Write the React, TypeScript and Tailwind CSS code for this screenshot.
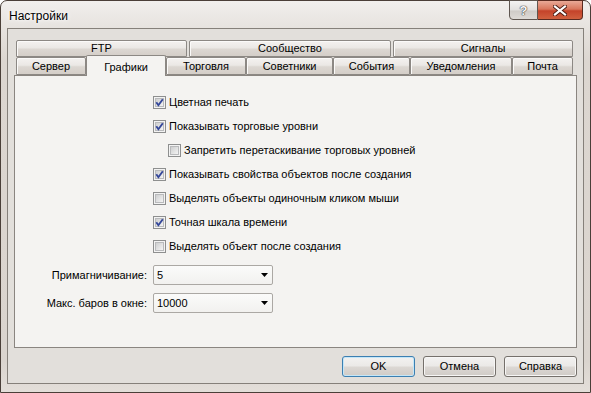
import React from "react";

function CheckBox({ checked }: { checked: boolean }) {
  return (
    <svg width="13" height="13" viewBox="0 0 13 13" className="shrink-0 block">
      <defs>
        <linearGradient id="cbInner" x1="0" y1="0" x2="1" y2="1">
          <stop offset="0" stopColor="#cbcccd" />
          <stop offset="1" stopColor="#f6f6f6" />
        </linearGradient>
      </defs>
      <rect x="0.5" y="0.5" width="12" height="12" fill="#f3f3f3" stroke="#8e8f8f" />
      <rect x="2.5" y="2.5" width="8" height="8" fill="url(#cbInner)" stroke="#b9babc" />
      {checked && (
        <path d="M3.3 6.2 L5.4 9.2 L9.8 3.2" fill="none" stroke="#34479a" strokeWidth="1.9" strokeLinejoin="miter" />
      )}
    </svg>
  );
}

function Row({ checked, label, indent }: { checked: boolean; label: string; indent?: boolean }) {
  return (
    <div className={"h-[24px] flex items-center gap-[3px] " + (indent ? "pl-[153px]" : "pl-[138px]")}>
      <CheckBox checked={checked} />
      <span className="leading-none">{label}</span>
    </div>
  );
}

function Tab({ w, label }: { w: string; label: string }) {
  return (
    <div
      className={
        w +
        " h-full flex items-center justify-center border border-[#8c8884] rounded-t-[2px] bg-[linear-gradient(to_bottom,#f4f2f0_0%,#ebe8e5_45%,#dcd7d2_55%,#d4cec8_100%)] shadow-[inset_1px_1px_0_#fbfaf9]"
      }
    >
      {label}
    </div>
  );
}

function Combo({ value }: { value: string }) {
  return (
    <div className="ml-[6px] w-[120px] h-[20px] border border-[#aba8a4] rounded-[2px] bg-[linear-gradient(to_bottom,#fbfbfa,#f2f1ef)] flex items-center pl-[3px] pr-[4px]">
      <span className="flex-1 leading-none">{value}</span>
      <svg width="7" height="4" viewBox="0 0 7 4" className="block">
        <polygon points="0,0 7,0 3.5,4" fill="#000" />
      </svg>
    </div>
  );
}

function Btn({ label, primary }: { label: string; primary?: boolean }) {
  return (
    <div
      className={
        "w-[73px] h-[21px] rounded-[3px] border flex items-center justify-center bg-[linear-gradient(to_bottom,#f3f2f1_0%,#ebe9e7_48%,#dcd8d4_52%,#d0cbc6_100%)] " +
        (primary
          ? "border-[#3c7fb1] shadow-[inset_0_0_0_1px_#c4e6f8]"
          : "border-[#75706b] shadow-[inset_0_0_0_1px_#f7f6f5]")
      }
    >
      {label}
    </div>
  );
}

export default function App() {
  return (
    <div className="w-[591px] h-[393px] bg-white font-['Liberation_Sans',Arial,sans-serif] text-[11px] text-black overflow-hidden">
      <div className="relative w-[591px] h-[393px] rounded-t-[7px] border border-[#4a3f38] bg-[linear-gradient(to_bottom,#f1efed_0px,#e6e2de_28px,#dcd6d0_60px,#dad4ce_360px,#e4dfda_393px)] flex flex-col">
        {/* title bar */}
        <div className="h-[27px] flex items-center pl-[8px] text-[12px] pt-[2px]">
          <span className="[text-shadow:0_0_6px_#ffffff,0_0_3px_#ffffff]">Настройки</span>
        </div>

        {/* caption buttons */}
        <div className="absolute top-[-1px] right-[7px] flex h-[20px]">
          <div className="w-[29px] h-full border border-[#5f5650] rounded-bl-[4px] bg-[linear-gradient(to_bottom,#f4f3f2_0%,#e2e0de_50%,#cfcbc7_55%,#dedad6_100%)] flex items-center justify-center">
            <span className="text-[13px] font-bold leading-none text-[#f6f6f6] [text-shadow:0_0_1px_#444,0_0_1px_#444,0_0_1px_#444]">?</span>
          </div>
          <div className="w-[45px] h-full border border-l-0 border-[#5a2a20] rounded-br-[4px] bg-[linear-gradient(to_bottom,#e9a997_0%,#d8765c_45%,#c4432a_55%,#d0603f_100%)] flex items-center justify-center">
            <svg width="14" height="11" viewBox="0 0 14 11" className="block">
              <path d="M2 1.5 L12 9.5 M12 1.5 L2 9.5" stroke="#4a1a12" strokeWidth="4" strokeLinecap="square" />
              <path d="M2 1.5 L12 9.5 M12 1.5 L2 9.5" stroke="#ffffff" strokeWidth="2.2" strokeLinecap="square" />
            </svg>
          </div>
        </div>

        {/* client area */}
        <div className="mx-[6px] h-[356px] border border-[#85807a] bg-[#e2dfdb] flex flex-col px-[6px] pt-[11px]">
          {/* tabs */}
          <div className="ml-[2px] mr-[3px] flex flex-col">
            <div className="h-[17px] flex">
              <Tab w="w-[171px]" label="FTP" />
              <div className="w-[2px]" />
              <Tab w="w-[202px]" label="Сообщество" />
              <div className="w-[2px]" />
              <Tab w="w-[180px]" label="Сигналы" />
            </div>
            <div className="h-[18px] flex items-end">
              <Tab w="w-[70px]" label="Сервер" />
              <div className="relative z-10 w-[80px] h-[21px] -mb-[1px] border border-b-0 border-[#8c8884] rounded-t-[2px] bg-[#f4f3f1] flex items-start justify-center pt-[3px]">
                Графики
              </div>
              <Tab w="w-[80px]" label="Торговля" />
              <Tab w="w-[87px]" label="Советники" />
              <Tab w="w-[77px]" label="События" />
              <Tab w="w-[102px]" label="Уведомления" />
              <Tab w="w-[61px]" label="Почта" />
            </div>
          </div>

          {/* panel */}
          <div className="h-[273px] border border-[#8a8580] bg-[#f4f3f1] flex flex-col pt-[14px]">
            <Row checked label="Цветная печать" />
            <Row checked label="Показывать торговые уровни" />
            <Row checked={false} indent label="Запретить перетаскивание торговых уровней" />
            <Row checked label="Показывать свойства объектов после создания" />
            <Row checked={false} label="Выделять объекты одиночным кликом мыши" />
            <Row checked label="Точная шкала времени" />
            <Row checked={false} label="Выделять объект после создания" />

            <div className="mt-[7px] flex items-center">
              <div className="w-[132px] text-right">Примагничивание:</div>
              <Combo value="5" />
            </div>
            <div className="mt-[8px] flex items-center">
              <div className="w-[132px] text-right">Макс. баров в окне:</div>
              <Combo value="10000" />
            </div>
          </div>

          {/* buttons */}
          <div className="mt-[8px] flex justify-end gap-[8px]">
            <Btn label="OK" primary />
            <Btn label="Отмена" />
            <Btn label="Справка" />
          </div>
        </div>
      </div>
    </div>
  );
}
